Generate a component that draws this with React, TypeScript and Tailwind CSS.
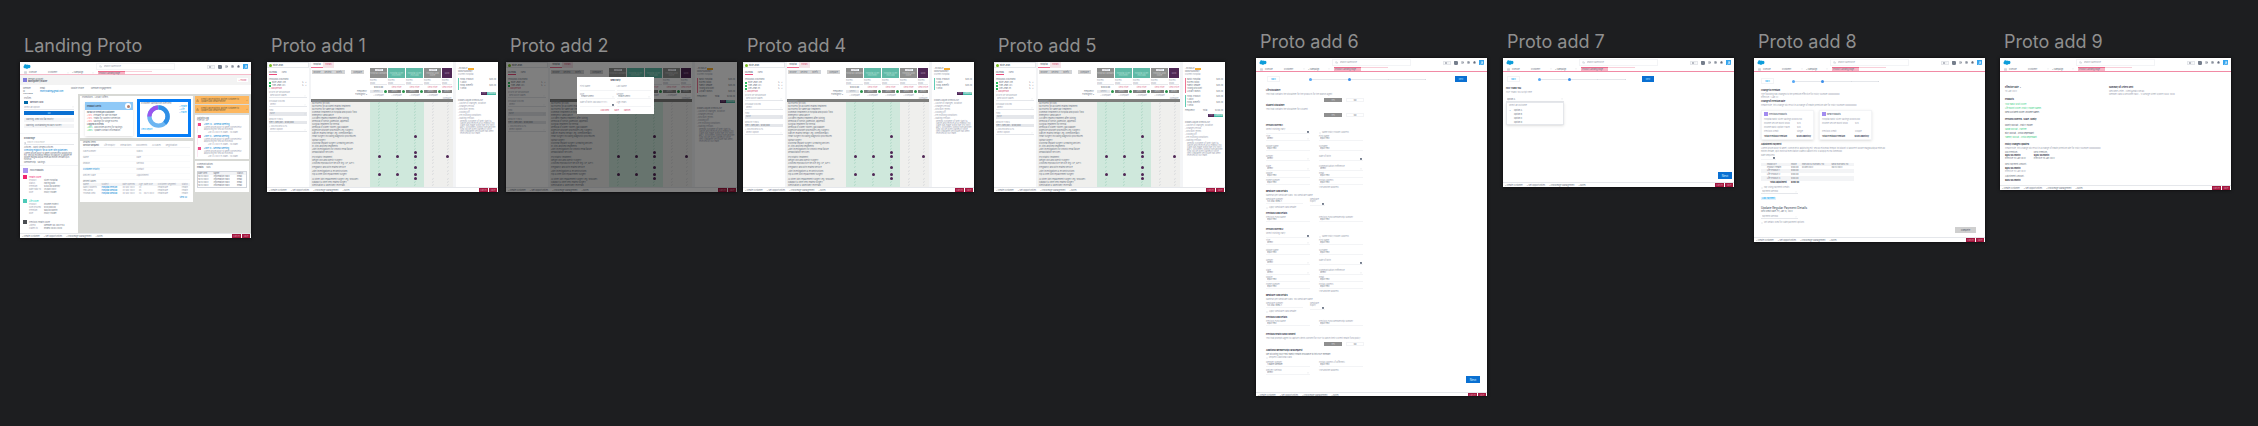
import { ReactNode } from "react";
import { clsx } from "clsx";
import { Bell, Calendar, Check, ChevronDown, Grid3x3, HelpCircle, Menu, Search, Settings, Star, TriangleAlert, User } from "lucide-react";

const TINY = "text-[2px] leading-[3px]";

function Frame({ title, place, size, children }: { title: string; place: string; size: string; children: ReactNode }) {
  return (
    <section className={clsx("absolute", place)}>
      <h2 className="ml-1 pb-1 text-lg leading-6 whitespace-nowrap text-[#8f8f8f]">{title}</h2>
      <div className={clsx("relative flex w-[231px] flex-col overflow-hidden bg-white shadow-[0_0_3px_rgba(0,0,0,0.8)]", size, TINY)}>
        {children}
      </div>
    </section>
  );
}

function CloudLogo() {
  return (
    <svg viewBox="0 0 24 16" className="h-[5px] w-[8px]">
      <path d="M10 2a5 5 0 0 1 6 1 5 5 0 0 1 7 5 5 5 0 0 1-6 5 5 5 0 0 1-5 2 5 5 0 0 1-6-2A4 4 0 0 1 1 9a4 4 0 0 1 2-4 4 4 0 0 1 7-3z" fill="#0d9dda" />
    </svg>
  );
}

function AppHeader({ thick = true }: { thick?: boolean }) {
  return (
    <header>
      <div className="grid h-[9px] grid-cols-[76px_79px_1fr] items-center">
        <div className="pl-[3px]"><CloudLogo /></div>
        <label className="flex h-[7px] items-center gap-[2px] border border-gray-100 px-[2px] text-gray-400">
          <Search className="size-[3px]" />
          <input aria-label="Search" placeholder="Search Salesforce" className="w-full placeholder:text-gray-400" />
        </label>
        <div className="flex items-center justify-end gap-[3px] pr-[3px] text-gray-500">
          <button className="flex h-[4px] items-center border border-gray-200 bg-gray-50 px-[1px]" aria-label="Favourites">
            <Star className="size-[2px] fill-gray-500" /><ChevronDown className="size-[2px]" />
          </button>
          <Grid3x3 strokeWidth={4} className="size-[4px] bg-gray-300" />
          <HelpCircle strokeWidth={3} className="size-[3px]" />
          <Settings strokeWidth={4} className="size-[3px]" />
          <Bell strokeWidth={3} className="size-[3px] fill-gray-500" />
          <span className="flex size-[5px] items-center justify-center bg-[#35a5ee] text-white"><User strokeWidth={3} className="size-[4px]" /></span>
        </div>
      </div>
      <nav className={clsx("flex h-[4px] items-center text-gray-500", !thick && "border-b border-[#f6bccb]")}>
        <Menu className="ml-[4px] size-[3px]" />
        <span className="ml-[2px] w-[19px]">Console</span>
        <a href="#customer" className="w-[19px]">Customer</a>
        <ChevronDown className="size-[2px]" />
        <a href="#campaign" className="ml-[3px] w-[20px]">▪ Campaign</a>
        <ChevronDown className="mr-[4px] size-[2px]" />
        <a href="#landing" className="h-[4px] w-[27px] border-t border-[#ef6c8d] bg-[#f5b5c5] pl-[1px] leading-[2px] whitespace-nowrap">Product Landing Page</a>
        <span className="h-[4px] w-[27px] border-t border-[#f9cfd9]" />
      </nav>
      {thick && <div className="h-px bg-[#f18aa5]" />}
    </header>
  );
}

function AppFooter() {
  return (
    <footer className="mt-auto flex h-[5px] shrink-0 items-center gap-[4px] border-t border-gray-200 bg-white pl-[2px] whitespace-nowrap text-gray-500">
      <span>▪ Create Customer</span>
      <span>▪ Net Opportunities</span>
      <span>▪ Knowledge Management</span>
      <span>▪ Notes</span>
      <div className="ml-auto flex gap-[1px] pr-[1px] text-[#d98ba0]">
        <button className="h-[4px] w-[9px] bg-[#a3173f] leading-[3px]">Cancel</button>
        <button className="h-[4px] w-[8px] bg-[#a3173f] leading-[3px]">Save</button>
      </div>
    </footer>
  );
}

/* ---------- Landing ---------- */

const PRODUCTS = [
  { name: "Health Cover", color: "text-[#f0256f]", box: "bg-[#f0256f]", gap: "mb-[5px]", rows: [["Product", "Silver Hospital"], ["Status", "Paying Now"], ["Premium", "$264.00 Monthly"], ["Date Paid To", "25 Nov 2022"], ["Role", "Policy Holder"]] },
  { name: "Life Cover", color: "text-teal-400", box: "bg-[#4cc9b7]", gap: "mb-[5px]", rows: [["Product", "Income Protect"], ["Sum Insured", "$120,000.00"], ["Premium", "$66.00 Month"], ["Role", "Policy Holder"]] },
  { name: "Previous Health Cover", color: "text-gray-500", box: "bg-[#4a4d52]", gap: "", rows: [["Joined", "Member No. 8827154"], ["Claims to", "Ended 28/02/2020"]] },
];

function LandingSidebar() {
  return (
    <aside className="w-[58px] shrink-0 bg-white pt-[3px] text-gray-500">
      <div className="h-[37px] border-b border-gray-100 px-[4px]">
        <p>Profiles</p>
        <p className="flex items-center gap-[2px] pt-[1px] font-bold"><span className="h-[3px] w-[4px] bg-sky-700" />Member Card</p>
        <label className="mt-[1px] flex h-[5px] items-center border-b border-gray-200">
          <select aria-label="Action" className="w-full appearance-none text-gray-400"><option>Select an Option</option></select>
          <ChevronDown className="size-[2px]" />
        </label>
        <button className="mt-[1px] block h-[4px] w-full bg-[#0a70d2] leading-[3px] text-sky-200">Go</button>
        <p className="mt-[3px] h-[4px] bg-gray-100 pl-[2px]">Warning: Debt will fail shortly</p>
        <p className="mt-[2px] h-[4px] bg-gray-100 pl-[2px]">Warning: Outstanding 90 days survey</p>
      </div>
      <div className="h-[32px] border-b border-gray-100 px-[4px] pt-[3px]">
        <h3 className="font-bold">Knowledge</h3>
        <label className="mt-[1px] mb-[1px] flex h-[4px] items-center gap-[1px] border-b border-gray-200">
          <Search className="size-[2px]" />
          <input aria-label="Search knowledge" placeholder="Search Knowledge" className="w-full" />
        </label>
        <p>Articles - Most Viewed Articles</p>
        <p className="whitespace-nowrap text-sky-600">Checking eligibility for a cover with guidelines</p>
        <p className="leading-[2px]">Lorem ipsum dolor sit amet consectetur adipiscing elit, sed do eiusmod tempor incididunt ut labore et dolore magna aliqua enim ad minim veniam quis nostrud</p>
        <p className="pt-[1px]">Membership &nbsp; Savings</p>
      </div>
      <div className="px-[3px]">
        <h3 className="flex h-[9px] items-center gap-[2px] font-bold"><span className="size-[5px] bg-[#ab97ef]" />HCF Products</h3>
        {PRODUCTS.map((p) => (
          <div key={p.name} className={p.gap}>
            <h4 className={clsx("flex h-[4px] items-center gap-[2px]", p.color)}><span className={clsx("size-[4px]", p.box)} />{p.name}</h4>
            <dl>
              {p.rows.map(([k, v]) => (
                <div key={k} className="flex pl-[6px]"><dt className="w-[15px] text-gray-400">{k}</dt><dd className="whitespace-nowrap">{v}</dd></div>
              ))}
            </dl>
          </div>
        ))}
      </div>
    </aside>
  );
}

function Donut() {
  return (
    <svg viewBox="0 0 48 48" className="size-[23px]" fill="none" strokeWidth="9">
      <circle cx="24" cy="24" r="19" stroke="#6db6f2" />
      <circle cx="24" cy="24" r="19" stroke="#2f8fe6" pathLength="100" strokeDasharray="38 62" transform="rotate(-90 24 24)" />
      <circle cx="24" cy="24" r="19" stroke="#9a55ee" pathLength="100" strokeDasharray="24 76" transform="rotate(180 24 24)" />
    </svg>
  );
}

const CASES = [
  ["Nancy Roberts", "Hospital Pension", "20 Nov 2022", "23", "", "Healthcare", "Health"],
  ["Ted Lasso", "Hospital Medical", "23 Nov 2022", "45", "", "Healthcare", "Health"],
  ["Thomas Reid", "Hospital Medical", "20 Nov 2022", "24", "30/11/2022", "Healthcare", "Health"],
];

function LandingCentre() {
  return (
    <main className="flex min-w-0 flex-1 flex-col gap-[3px]">
      <section className="bg-white px-[2px] pb-px text-gray-500">
        <h3 className="h-[3px]">Promotions - Loyalty Offers</h3>
        <div className="flex items-start justify-between pl-[3px]">
          <div className="mt-[3px] h-[34px] w-[48px] shadow">
            <div className="flex h-[8px] items-center justify-between bg-[#8fc9f7] px-[2px] font-bold text-gray-700">
              Product Alerts
              <span className="flex size-[6px] items-center justify-center rounded-full bg-white"><span className="size-[3px] rounded-full bg-orange-900/60" /></span>
            </div>
            <div className="px-[2px] pt-px whitespace-nowrap">
              <p className="font-bold">NEW/UP Premium Customer</p>
              {["Prepare for rate increase", "Thank for Monthly Retention", "Savings for Single Excess"].map((t) => <p key={t}><span className="text-red-400">+10%</span> &nbsp;{t}</p>)}
              <p className="font-bold">Logged In Events</p>
              {["Add online access for savings", "Update Contact Information"].map((t) => <p key={t}><span className="text-green-500">+45%</span> &nbsp;{t}</p>)}
            </div>
          </div>
          <div className="h-[38px] w-[54px] border-3 border-[#067df7] bg-white px-px">
            <p>Customer Satisfaction Overview</p>
            <div className="flex items-start justify-between pl-[6px]">
              <Donut />
              <p className="text-sky-500">▪ Health<br />▪ Life<br />▪ Travel</p>
            </div>
            <a href="#report" className="block text-sky-500">View Report</a>
          </div>
        </div>
      </section>
      <section className="h-[61px] bg-white px-[3px] text-gray-400">
        <h3 className="text-gray-500">Related Items</h3>
        <div className="mb-[2px] flex gap-[5px] border-b border-gray-100 whitespace-nowrap">
          <b className="text-gray-500">Service Request</b><span>Life Enquiry</span><span>Interactions</span><span>Documents</span><span>All Cases</span><span>Registration</span>
        </div>
        {[["Case Number", "Status"], ["Name", "Date"], ["Reason", "Method"], ["Customer Priority", "Contact"], ["Delivery Date", "Appointment"]].map(([a, b], i) => (
          <div key={a} className="grid h-[6px] grid-cols-2 border-b border-gray-50"><span className={clsx(i === 3 && "text-sky-600")}>{a}</span><span>{b}</span></div>
        ))}
        <h3 className="text-gray-500">Recent Cases</h3>
        <table className="w-full text-left whitespace-nowrap">
          <thead><tr className="h-[3px] bg-gray-100">{["Name", "Subject", "Date Opened", "Age", "Date Due", "Customer Segment", "Status"].map((h) => <th key={h} className="p-0 font-normal">{h}</th>)}</tr></thead>
          <tbody>{CASES.map((r) => <tr key={r[0]} className="h-[3px]">{r.map((c, j) => <td key={j} className={clsx("p-0", j === 1 && "text-sky-600")}>{c}</td>)}</tr>)}</tbody>
        </table>
        <a href="#all" className="block pt-[1px] pr-[3px] text-right text-sky-600">View All</a>
      </section>
    </main>
  );
}

function LandingRight() {
  return (
    <aside className="flex w-[54px] shrink-0 flex-col gap-px text-gray-500">
      {[1, 2].map((n) => (
        <p key={n} className="flex h-[8px] items-center gap-[2px] bg-[#fdb75f] px-[1px] leading-[2px] text-[#6f5a35]">
          <TriangleAlert className="size-[3px] shrink-0" />Credit card expiring, advise customer to update card details online
          <span className="ml-auto">✕</span>
        </p>
      ))}
      <section className="mt-px h-[44px] bg-white px-[2px] pt-[2px]">
        <h3 className="leading-[2px] font-bold">Activity Log</h3>
        <p className="leading-[2px]">Filter by: All</p>
        {["June 24 - General Meeting", "June 14 - General Meeting", "June 13 - General Meeting"].map((t) => (
          <div key={t} className="flex h-[12px] gap-[3px] pt-[2px]">
            <span className="border-l border-pink-100"><span className="block size-[3px] bg-[#ee4b86]" /></span>
            <div className="leading-[2px] text-gray-400"><p className="leading-[3px] text-sky-600">{t}</p><p>Lorem ipsum dolor sit amet consectetur adipiscing elit sed do eiusmod</p><p className="pt-[1px] pl-[4px]">Jun 24 2022 9:30am - 10:30am</p></div>
          </div>
        ))}
      </section>
      <section className="mt-px h-[31px] bg-white p-[2px]">
        <h3>Communications</h3>
        <p className="pb-[2px]"><b>Emails</b> &nbsp; &nbsp; SMS</p>
        <table className="w-full border border-gray-300 text-left whitespace-nowrap">
          <thead><tr className="bg-gray-100">{["Date Sent", "Name", "Status"].map((h) => <th key={h} className="font-normal">{h}</th>)}</tr></thead>
          <tbody>{[1, 2, 3, 4].map((n) => <tr key={n}><td>10/12/2022</td><td>Information Pack</td><td>Email</td></tr>)}</tbody>
        </table>
      </section>
    </aside>
  );
}

function Landing() {
  return (
    <>
      <AppHeader thick={false} />
      <div className="flex h-[10px] items-center gap-[1px] bg-[#f3f3f3] px-[3px] leading-[2px] text-gray-600">
        <span className="size-[4px] bg-[#7f7bdc]" />
        <div><p>Person Account</p><p className="font-bold">Montgomery Blaine</p></div>
        <button className="ml-auto h-[4px] w-[11px] bg-white leading-[3px] text-[#d5456d]">+ Follow</button>
      </div>
      <div className="flex h-[9px] gap-[7px] px-[3px] pt-[2px] text-gray-500">
        <div className="w-[10px]"><p>Member ID</p><p className="font-bold">33912898</p></div>
        <div className="w-[24px]"><p>Email</p><p className="text-sky-600">montyblaine@gmail.com</p></div>
        <p>Mobile Phone</p>
        <p>Member Engagement</p>
      </div>
      <div className="flex min-h-0 flex-1 bg-[#d8d9d5]">
        <LandingSidebar />
        <div className="flex min-w-0 flex-1 items-start gap-[2px] px-[2px] pt-[2px]">
          <LandingCentre />
          <LandingRight />
        </div>
      </div>
      <AppFooter />
    </>
  );
}

/* ---------- Cover comparison ---------- */

const BENEFITS = [
  "No excess for kids", "No excess for accident related treatment", "No excess for same day treatment", "Common treatments in hospital and public fund", "Emergency ambulance",
  "Accident related treatment after joining", "Removal of tonsils, adenoids, appendix", "Surgical treatment for hernia", "Removal of kidney stones, gall bladder", "Digestive disorder procedures (eg. surgery)",
  "Cancer related therapy (eg. chemotherapy)", "Heart surgery including diagnostic procedures", "Spinal surgery", "Cochlear implant surgery & hearing devices", "In-vitro assisted treatments",
  "Joint investigations for chronic renal failure", "Rehabilitation services", "Psychiatric treatment", "Weight loss and obesity surgery", "Assisted reproductive service (eg. IVF, GIFT)",
  "Pregnancy and birth related service", "Joint investigations & reconstructions", "Hip & knee joint replacement surgery", "All other joint replacement surgery (eg. shoulder)", "Cataract & other lens related surgery", "Sterilisation & vasectomy reversals",
];
const DOTS: Record<number, number[]> = { 11: [2], 16: [2], 17: [0, 1, 2, 4], 20: [2], 22: [0, 1, 2], 23: [2] };

const PLANS = [
  { name: "Hospital Standard", bg: "bg-[#8f908f]", ink: "text-[#c9c9c9]", tag: true },
  { name: "Hospital Silver Plus Entry", bg: "bg-[#5fb9a6]", ink: "text-[#b4e0d6]", tag: false },
  { name: "Hospital Silver Plus Mid", bg: "bg-[#5fb9a6]", ink: "text-[#b4e0d6]", tag: false },
  { name: "Hospital Gold Cover", bg: "bg-[#8f908f]", ink: "text-[#c9c9c9]", tag: true },
  { name: "Gold", bg: "bg-[#4f2755]", ink: "text-[#a98aae]", tag: false },
];

function FilterSelect({ label, value, shaded }: { label: string; value: string; shaded?: boolean }) {
  return (
    <label className="mt-[1px] block text-gray-400">
      {label}
      <span className={clsx("flex h-[4px] items-center border-b border-gray-200 px-[1px]", shaded && "bg-gray-200")}>
        <select aria-label={value} className="w-full appearance-none"><option>{value}</option></select>
        <ChevronDown className="size-[2px]" />
      </span>
    </label>
  );
}

function CompareSidebar({ people }: { people: string[] }) {
  return (
    <aside className="w-[42px] shrink-0 text-gray-500">
      <p className="flex h-[6px] items-center gap-[1px] border border-gray-200 px-[1px] font-bold"><span className="size-[3px] rounded-full bg-[#78be20]" />Billie Jean</p>
      <div className="px-[2px] pt-[3px]">
        <p className="mb-[3px] flex gap-[5px]"><b className="border-b border-[#ec4a7b]">FILTERS</b><span>INFO</span></p>
        <p>PERSONS COVERED</p>
        {people.map((p) => (
          <p key={p} className="flex items-center gap-[1px]"><span className="size-[2px] bg-[#2dbe60]" />{p}<span className="ml-auto">✎ ✕</span></p>
        ))}
        <button className="block leading-[3px] text-[#d5456d]">+ Add person</button>
        <div className="flex flex-col gap-[1px]">
          <FilterSelect label="STATE OF RESIDENCE" value="New South Wales" />
          <FilterSelect label="CHANGE COVER" value="Select" />
          <FilterSelect label="TIER" value="Base" shaded />
        </div>
        <p className="pt-[2px] text-gray-400">REBATE TIERS</p>
        <p className="mb-[1px] h-[3px] bg-gray-200 whitespace-nowrap">Tier 1: $93,001 - $108,000</p>
        <FilterSelect label="+ COVER RESULTS" value="Select Option" />
      </div>
    </aside>
  );
}

function CompareGrid() {
  return (
    <main className="flex w-[146px] shrink-0 flex-col overflow-hidden border-x-2 border-gray-100">
      <nav className="flex h-[6px] items-center text-center">
        <a href="#hospital" className="h-[6px] w-[12px] border-b border-[#ee6f91] pt-[1px] text-gray-600">Hospital</a>
        <a href="#extras" className="h-[6px] w-[11px] bg-[#f6e3e8] pt-[1px] text-[#d5456d]">Extras</a>
      </nav>
      <div className="flex h-[31px] text-gray-500">
        <div className="flex w-[59px] shrink-0 flex-col justify-between px-[1px] pt-[2px]">
          <div className="flex">
            {["Browse", "Review", "Briefs"].map((t) => <button key={t} className="h-[4px] w-[11px] border-r border-gray-300 bg-[#d4d4d4] leading-[3px]">{t}</button>)}
            <button className="ml-[6px] h-[4px] w-[13px] bg-[#d4d4d4] leading-[3px]">Compare</button>
          </div>
          <div className="pr-[2px] pb-[3px] text-right"><p>Frequency</p><p>Fortnightly ▾</p></div>
        </div>
        {PLANS.map((p, i) => (
          <div key={p.name} className={clsx("mr-px shrink-0 text-center text-gray-400", i === 4 ? "w-[10px]" : "w-[17px]")}>
            <div className={clsx("flex h-[10px] flex-col items-center leading-[2px]", p.bg, p.ink, p.tag ? "pt-[1px]" : "pt-[4px]")}>
              {p.tag && <span className="mb-[1px] h-[2px] w-[8px] bg-white text-gray-400">Current</span>}
              {p.name}
            </div>
            <label className="block pt-[1px] text-left">Excess
              <select className="block h-[3px] w-full appearance-none border-b border-gray-200 leading-[2px]"><option>$500</option></select>
            </label>
            <p className={clsx("pt-[1px] whitespace-nowrap", i === 0 ? "text-gray-600" : "text-[#e07391]")}>{i === 0 ? "$1024.00" : "View Price"}</p>
            <div className="flex items-center gap-[1px] pt-[1px]">
              <button className={clsx("h-[3px] leading-[3px]", i === 4 ? "w-[10px]" : "w-[13px]", i === 0 ? "bg-gray-200" : "bg-[#828282] text-gray-300")}>Select</button>
              {i < 4 && <span className="size-[3px] rounded-full bg-[#29924a]" />}
            </div>
            <p className="pt-[1px]">+ Compare</p>
          </div>
        ))}
      </div>
      <div className="min-h-0 flex-1 overflow-hidden bg-[#efefed]">
        <table className="h-full w-full table-fixed border-collapse text-center">
          <thead>
            <tr className="h-[3px] bg-[#7e7e7c] text-left text-gray-400">
              <th className="w-[59px] pl-[1px] leading-[2px] font-normal">Inclusions</th>
              {PLANS.map((p, i) => <th key={p.name} className={i === 4 ? "w-[11px]" : "w-[18px]"} />)}
            </tr>
          </thead>
          <tbody>
            {BENEFITS.map((b, r) => (
              <tr key={b}>
                <td className="p-0 pl-[1px] text-left leading-[2px] whitespace-nowrap text-gray-500">{b}</td>
                {PLANS.map((p, c) => (
                  <td key={p.name} className={clsx("p-0 leading-[2px]", c < 3 ? "bg-[#cfe8dc] text-[#4fa888]" : "text-gray-400")}>
                    {DOTS[r]?.includes(c) ? <span className="mx-auto block size-[3px] rounded-full bg-[#4f2755]" /> : <Check strokeWidth={3} className="mx-auto size-[2px]" />}
                  </td>
                ))}
              </tr>
            ))}
          </tbody>
        </table>
      </div>
    </main>
  );
}

function QuoteLines({ border, lines }: { border: string; lines: string[] }) {
  return (
    <div className={clsx("mb-[2px] border-l", border)}>
      {lines.map((l, i) => <p key={l} className="flex justify-between pl-[1px]"><span>{l}</span>{i % 2 === 0 && <span>$45.20</span>}</p>)}
    </div>
  );
}

const PINK_LINES = ["Basic Hospital", "Excess $500", "Family Rebate", "Young Discount", "Loyalty Bonus"];
const TEAL_LINES = ["Hosp. Product", "1 Adult", "Hosp. Benefit", "1 Child"];

function QuotePanel({ pink, teal, total }: { pink?: boolean; teal?: boolean; total?: boolean }) {
  return (
    <aside className="min-w-0 flex-1 border-l border-gray-100 px-[2px] pt-[5px] text-gray-500">
      <p className="flex items-center gap-[1px]">▫ BUNDLE <span className="h-[2px] w-[6px] bg-[#f5ac31]" /></p>
      <p>MONTGOMERY</p>
      <p className="mb-[2px] text-gray-400">Current Hospital</p>
      {pink && <QuoteLines border="border-[#ef7696]" lines={PINK_LINES} />}
      {teal && <QuoteLines border="border-[#5fcbb5]" lines={TEAL_LINES} />}
      {total && <p className="flex justify-between"><span>Frequency</span><span>Total</span><span>$246.20</span></p>}
      <div className="mt-[2px] mb-[4px] flex justify-end">
        <button className="h-[3px] w-[6px] bg-[#4f2755] leading-[3px] text-[#a98aae]">Print</button>
        <button className="h-[3px] w-[9px] bg-[#45b8a4] leading-[3px] text-white">Continue</button>
      </div>
      <p>COMPLIANCE CHECKLIST</p>
      <div className="text-gray-400">
        {["Advise of changes, duration", "Charges Period", "Discount Terms", "Cooling off", "Pre-existing conditions", "Waiting Periods"].map((t) => <p key={t}>▫ {t}</p>)}
        <p className="pl-[2px] leading-[2px]">Remind customer of their right to cancel and receive a full refund if no claim was made within the first thirty days. Customers joining from another fund will be given continuity once their clearance certificate has been received by our team</p>
      </div>
    </aside>
  );
}

function Compare({ people, pink, teal, total }: { people: string[]; pink?: boolean; teal?: boolean; total?: boolean }) {
  return (
    <>
      <div className="flex min-h-0 flex-1">
        <CompareSidebar people={people} />
        <CompareGrid />
        <QuotePanel pink={pink} teal={teal} total={total} />
      </div>
      <AppFooter />
    </>
  );
}

function PersonDialog() {
  return (
    <div className="absolute inset-0 bg-black/50">
      <div role="dialog" aria-label="New Party" className="absolute top-[15px] left-[71px] h-[37px] w-[77px] bg-white px-[3px] pt-[2px] text-gray-500">
        <h3 className="mb-[3px] text-center font-bold text-gray-700">New Party</h3>
        <div className="grid grid-cols-2 gap-x-[2px] gap-y-[1px]">
          <Field label="First Name" value="" />
          <Field label="Last Name" value="" />
          <Field label="Role" value="Please Select" kind="select" />
          <Field label="Gender" value="Please Select" kind="select" />
          <Field label="Date of Birth (DD/MM/YYYY)" value="" kind="date" />
          <Field label="Age/Years" value="" />
        </div>
        <div className="mt-[1px] flex justify-center gap-[5px] text-[#d5456d]"><button className="leading-[3px]">Add New</button><button className="leading-[3px]">Save</button><button className="leading-[3px]">Cancel</button></div>
      </div>
    </div>
  );
}

/* ---------- Wizard pages ---------- */

type Kind = "text" | "select" | "date";

function Field({ label, value, kind = "text" }: { label: string; value: string; kind?: Kind }) {
  return (
    <label className="block h-[7px] text-gray-400">
      <span className="block leading-[2px]">{label}</span>
      <span className="flex h-[4px] items-center border-b border-gray-100 px-[1px] text-gray-500">
        {kind === "select" ? <select className="w-full appearance-none"><option>{value}</option></select> : <input defaultValue={value} className="w-full min-w-0" />}
        {kind === "select" && <ChevronDown className="size-[2px] shrink-0" />}
        {kind === "date" && <Calendar strokeWidth={4} className="size-[2px] shrink-0 bg-gray-400" />}
      </span>
    </label>
  );
}

function CheckLine({ label }: { label: string }) {
  return (
    <label className="flex items-center gap-[1px] text-gray-400">
      <input type="checkbox" className="size-[2px] appearance-none border border-gray-100" />
      {label}
    </label>
  );
}

function Steps({ pad, track, next = true }: { pad: string; track: string; next?: boolean }) {
  return (
    <div className={clsx("flex items-center", pad)}>
      <button className="h-[6px] w-[13px] border border-gray-100 leading-[3px] text-sky-500">Back</button>
      <ol className={clsx("flex items-center justify-between bg-[linear-gradient(#e5e7eb,#e5e7eb)] bg-[length:100%_1px] bg-center bg-no-repeat", track)}>
        <li className="size-[3px] rounded-full bg-[#56a8f5]" />
        <li className="size-[3px] rounded-full bg-[#3c8eea]" />
        <li className="size-px rounded-full bg-gray-300" />
        <li className="size-px rounded-full bg-gray-300" />
      </ol>
      {next && <button className="ml-auto h-[6px] w-[12px] bg-[#0a70d2] leading-[3px] text-sky-200">Next</button>}
    </div>
  );
}

function NextButton({ pad }: { pad: string }) {
  return (
    <div className={clsx("mt-auto flex justify-end", pad)}>
      <button className="h-[7px] w-[14px] bg-[#0a70d2] text-[3px] leading-[6px] text-sky-100">Next</button>
    </div>
  );
}

function Heading({ children }: { children: ReactNode }) {
  return <h3 className="h-[4px] leading-[3px] font-bold text-gray-800">{children}</h3>;
}

function YesNo() {
  return (
    <div className="ml-[58px] flex gap-[4px]">
      <button className="h-[4px] w-[18px] bg-[#8f8f8f] leading-[3px] text-gray-300">Yes</button>
      <button className="h-[4px] w-[18px] border border-gray-100 leading-[2px] text-gray-500">No</button>
    </div>
  );
}

const PAIR = "grid grid-cols-[44px_44px] gap-x-[9px]";

function Person({ n }: { n: number }) {
  return (
    <section>
      <Heading>Person Covered {n}</Heading>
      <div className={PAIR}>
        <Field label="Select Existing Party" value="" kind="date" />
        <div className="pt-[3px]"><CheckLine label="Same Policy Holder Address" /></div>
        <Field label="Title" value="Select" kind="select" /><Field label="First Name" value="Input Text" />
      </div>
      <div className={clsx(PAIR, "mt-[3px] gap-y-[3px]")}>
        <Field label="Middle Name" value="Input Text" /><Field label="Surname" value="Input Text" />
        <Field label="Gender" value="Select" kind="select" /><Field label="Date of Birth" value="" kind="date" />
        <Field label="State" value="Select" kind="select" /><Field label="Communication Preference" value="Select" kind="select" />
      </div>
      <div className={PAIR}>
        <Field label="Mobile" value="Input Text" /><Field label="Email" value="Input Text" />
        <Field label="Home Number" value="Input Text" /><Field label="Postal Address" value="Input Text" />
      </div>
      <p className="ml-[53px] h-[4px] text-gray-400">Use another address</p>
      <Heading>Medicare Card Details</Heading>
      <p className="h-[4px] text-gray-400">Name as per Medicare Card: You Medicare Name</p>
      <div className="mb-[1px] grid grid-cols-[37px_15px] gap-x-[7px]">
        <Field label="Medicare Number" value="123 456 7890-1" /><Field label="Medicare Expiry" value="" kind="date" />
      </div>
      <CheckLine label="Apply Medicare Card Rebate" />
      <div className="mt-[3px]"><Heading>Previous Fund Details</Heading></div>
      <div className={PAIR}><Field label="Previous Fund Name" value="Input Text" /><Field label="Previous Fund Membership Number" value="Input Text" /></div>
    </section>
  );
}

function Members() {
  return (
    <>
      <AppHeader />
      <div className="flex flex-1 flex-col pl-[10px]">
        <Steps pad="pt-[4px] pr-[20px] pl-[1px]" track="ml-[29px] w-[117px]" />
        <div className="mt-[7px] h-[15px]">
          <Heading>Life Disclaimer</Heading>
          <p className="mb-[2px] text-gray-400">Text that contains the disclaimer for the products for the branch agent</p>
          <YesNo />
        </div>
        <div className="h-[20px]">
          <Heading>Student Disclaimer</Heading>
          <p className="mb-[2px] text-gray-400">Text that contains the disclaimer for Student</p>
          <YesNo />
        </div>
        <div className="mb-[5px]"><Person n={1} /></div>
        <Person n={2} />
        <div className="mt-[6px] h-[16px]">
          <Heading>Previous Health Fund Consent</Heading>
          <p className="mb-[2px] text-gray-400">Text that prompts agent to capture clients consent for HCF to cancel their current health fund policy</p>
          <YesNo />
        </div>
        <Heading>Additional Membership Card Request</Heading>
        <p className="text-gray-500">We will bring your Flexi Family Health Insurance to this HCF member</p>
        <div className="mb-[2px]"><CheckLine label="Request Additional Card" /></div>
        <div className={clsx(PAIR, "gap-y-[1px]")}>
          <Field label="Member Number" value="1 Blaine Member" /><Field label="Postal Address (if different)" value="Input Text" />
          <Field label="Delivery Method" value="Select" kind="select" /><p className="text-gray-400">Use another address</p>
        </div>
        <NextButton pad="pr-[7px] pb-[9px]" />
      </div>
      <AppFooter />
    </>
  );
}

function ThankYou() {
  return (
    <>
      <AppHeader />
      <div className="flex flex-1 flex-col pl-[3px]">
        <Steps pad="pt-[4px] pr-[80px] pl-[1px]" track="ml-[18px] w-[88px]" />
        <div className="mt-[5px]"><Heading>HCF Thank You</Heading></div>
        <p className="text-gray-400">HCF Thank You Script Here</p>
        <div className="mt-[3px] w-[58px]">
          <label className="flex h-[5px] items-center border-b border-gray-200 px-[1px] text-gray-500">
            <select aria-label="Outcome" className="w-full appearance-none"><option>Option A</option></select>
            <ChevronDown className="size-[2px]" />
          </label>
          <ul className="h-[23px] border border-gray-200 px-[2px] pt-[1px] text-gray-500 shadow">
            <li className="mb-[1px] text-gray-400">Select an Outcome</li>
            {["Option A", "Option B", "Option C", "Option D"].map((o, i) => (
              <li key={o} className="flex h-[4px] items-center"><span className="w-[5px] text-sky-600">{i === 0 && "✓"}</span>{o}</li>
            ))}
          </ul>
        </div>
        <NextButton pad="pr-[2px] pb-[3px]" />
      </div>
      <AppFooter />
    </>
  );
}

function PremiumCard({ title, rows, total }: { title: string; rows: string[][]; total: string }) {
  return (
    <div className="h-[30px] w-[53px] border border-gray-100 px-[2px] pt-[1px] text-gray-400 shadow-sm">
      <h4 className="mb-[2px] flex items-center gap-[1px] font-bold text-gray-500"><span className="size-[4px] bg-[#a28cf0]" />{title}</h4>
      <dl>
        {rows.map(([k, v]) => <div key={k} className="flex h-[4px]"><dt className="w-[33px] whitespace-nowrap">{k}</dt><dd>{v}</dd></div>)}
        <div className="flex pt-[1px] font-bold whitespace-nowrap text-gray-700"><dt className="w-[33px]">Total Previous Premium</dt><dd>{total}</dd></div>
      </dl>
    </div>
  );
}

function Payment() {
  return (
    <>
      <AppHeader />
      <div className="flex flex-1 flex-col pl-[7px] text-gray-400">
        <Steps pad="pt-[6px]" track="ml-[18px] w-[87px]" next={false} />
        <div className="mt-[5px]"><Heading>Change to Premium</Heading></div>
        <p>The following has changed to the premium effective for Policy Number 000000000</p>
        <p>Effective: 1 Jan 22</p>
        <div className="mt-[1px]"><Heading>Change of Premium Rate</Heading></div>
        <p>Please note, this change will result in a change of health premium rate for Policy Number 000000000</p>
        <div className="mt-[3px] flex gap-[5px]">
          <PremiumCard title="Previous Products" total="$1286 Monthly" rows={[["Hospital Basic Silver Savings $300", "$250"], ["Income Secure Boost $500", "$25"], ["Income Basic Option Travel", "$45"], ["Previous Credit", "Single"]]} />
          <PremiumCard title="New Products" total="$1286 Monthly" rows={[["Hospital Basic Silver Savings $300", "$260"], ["Income Secure Boost $500", "$25"], ["\u00a0", ""], ["Previous Credit", "Couple"]]} />
        </div>
        <div className="mt-[3px]"><Heading>Adjustment Payment</Heading></div>
        <p className="w-[125px]">Lorem ipsum dolor sit amet, consectetur adipiscing elit, sed do eiusmod tempor incididunt ut labore et dolore magna aliqua enim ad minim veniam, quis nostrud exercitation ullamco laboris nisi ut aliquip ex ea commodo</p>
        <div className="mt-[1px] w-[15px]"><Field label="Date Required" value="" kind="date" /></div>
        <table className="mt-[2px] w-[93px] text-left text-gray-500">
          <thead><tr className="bg-gray-100"><th className="w-[30px] pl-[6px] font-normal">PRODUCT</th><th className="font-normal">PRICE</th><th className="font-normal">PREVIOUS EXPIRES TO</th><th className="font-normal">NEW EXPIRES TO</th></tr></thead>
          <tbody>
            <tr><td className="pl-[6px]">Product Health</td><td>$100.00</td><td>02/09/2022</td><td>30/12/2022</td></tr>
            {["Life Product 1", "Life Product 2", "Life Product 3"].map((t, i) => <tr key={t} className={clsx("border-b border-gray-100", i !== 1 && "bg-gray-100")}><td className="pl-[6px]">{t}</td><td>$100.00</td><td /><td /></tr>)}
            <tr className="font-bold text-gray-800"><td className="pl-[9px] whitespace-nowrap">Total Adjustment</td><td>$100.00</td><td /><td /></tr>
          </tbody>
        </table>
        <div className="mt-[2px]"><CheckLine label="Pay using Payment Credits" /></div>
        <div className="w-[37px]"><FilterSelect label="" value="Payment Method" /></div>
        <button className="mt-[3px] h-[3px] self-start bg-sky-100 px-px leading-[3px] whitespace-nowrap text-sky-500">Add Payment</button>
        <h3 className="mt-[6px] text-[3px] leading-[4px] font-medium text-gray-600">Update Regular Payment Details</h3>
        <p className="text-gray-500">Next Debit Date: Fri, Jan 14, 2022</p>
        <div className="mt-[1px] w-[37px]"><FilterSelect label="" value="Payment Method" /></div>
        <div className="mt-[2px]"><CheckLine label="Set details used for claim payment options" /></div>
        <div className="mt-auto flex justify-end pr-[9px] pb-[4px]">
          <button className="h-[6px] w-[21px] bg-[#cfcfcf] leading-[3px] text-gray-600">Complete</button>
        </div>
      </div>
      <AppFooter />
    </>
  );
}

function Summary() {
  const green = "text-[#39cf83]";
  return (
    <>
      <AppHeader />
      <div className="grid flex-1 grid-cols-[104px_1fr] content-start pt-[14px] pl-[5px] text-gray-400">
        <div className="whitespace-nowrap">
          <Heading>Effective Date &nbsp; ▪</Heading>
          <p className="mb-[5px]">1st Jan 2022</p>
          <Heading>Products</Heading>
          <div className="mb-[4px] leading-[4px]">
            <p className={green}>Your Basic Multi Cover</p>
            <p className={green}>Life Boost Cover (Policy Holder Name)</p>
            <p className="text-gray-600">New Accident Cover (Income Name)</p>
          </div>
          <Heading>Persons Covered - Scale: Family</Heading>
          <div className="mt-[1px] mb-[4px] leading-[4px] text-gray-600">
            <p>Monty Roccat - Policy Holder</p>
            <p className={green}>Sarah Roccat - Partner</p>
            <p>Billy Roccat - Child Dependant</p>
            <p className={green}>Tammy Roccat - Child Dependant</p>
          </div>
          <Heading>Policy Changes Updated</Heading>
          <p>Please note, this change will result in a change of health premium rate for Policy Number 000000000</p>
          <div className="mt-[1px] mb-[4px] flex gap-[8px] text-gray-500">
            <div><p>Old Premium:</p><p className="font-bold text-gray-800">$982.99/month</p><p className="leading-[2px]">Effective 1st Jan 2022</p></div>
            <div><p>New Premium:</p><p className="font-bold text-gray-800">$982.99/month</p><p className="leading-[2px]">Effective 1st Jan 2022</p></div>
          </div>
          <p className="text-gray-500">Next Payment Amount:</p>
          <p className="mt-[1px] font-bold text-gray-800">$982.99/month</p>
          <p className="mb-[2px]">Effective 1st Jan 2022</p>
          <p className="text-gray-500">Adjustment Amount:</p>
          <p className="mt-[1px] font-bold text-gray-800">$982.99/month</p>
        </div>
        <div>
          <Heading>Summary of Letters Sent</Heading>
          <p>Welcome Letter - client@mail.com.au</p>
          <p>Member Card & Welcome Pack - 12 George Street Sydney NSW 2000</p>
        </div>
      </div>
      <AppFooter />
    </>
  );
}

const TWO = ["Billie Jean (39)", "Tom Jean (41)"];
const THREE = [...TWO, "Ann Jean (9)"];

export default function App() {
  return (
    <div className="relative min-h-screen overflow-hidden bg-[#1d1e20] font-['Inter','Liberation_Sans',sans-serif]">
      <Frame title="Landing Proto" place="left-[20px] top-[34px]" size="h-[176px]"><Landing /></Frame>
      <Frame title="Proto add 1" place="left-[267px] top-[34px]" size="h-[130px]"><Compare people={TWO} teal /></Frame>
      <Frame title="Proto add 2" place="left-[506px] top-[34px]" size="h-[130px]">
        <Compare people={TWO} pink total />
        <PersonDialog />
      </Frame>
      <Frame title="Proto add 4" place="left-[743px] top-[34px]" size="h-[130px]"><Compare people={THREE} teal /></Frame>
      <Frame title="Proto add 5" place="left-[994px] top-[34px]" size="h-[130px]"><Compare people={THREE} pink teal total /></Frame>
      <Frame title="Proto add 6" place="left-[1256px] top-[30px]" size="h-[338px]"><Members /></Frame>
      <Frame title="Proto add 7" place="left-[1503px] top-[30px]" size="h-[129px]"><ThankYou /></Frame>
      <Frame title="Proto add 8" place="left-[1754px] top-[30px]" size="h-[184px]"><Payment /></Frame>
      <Frame title="Proto add 9" place="left-[2000px] top-[30px]" size="h-[132px]"><Summary /></Frame>
    </div>
  );
}
